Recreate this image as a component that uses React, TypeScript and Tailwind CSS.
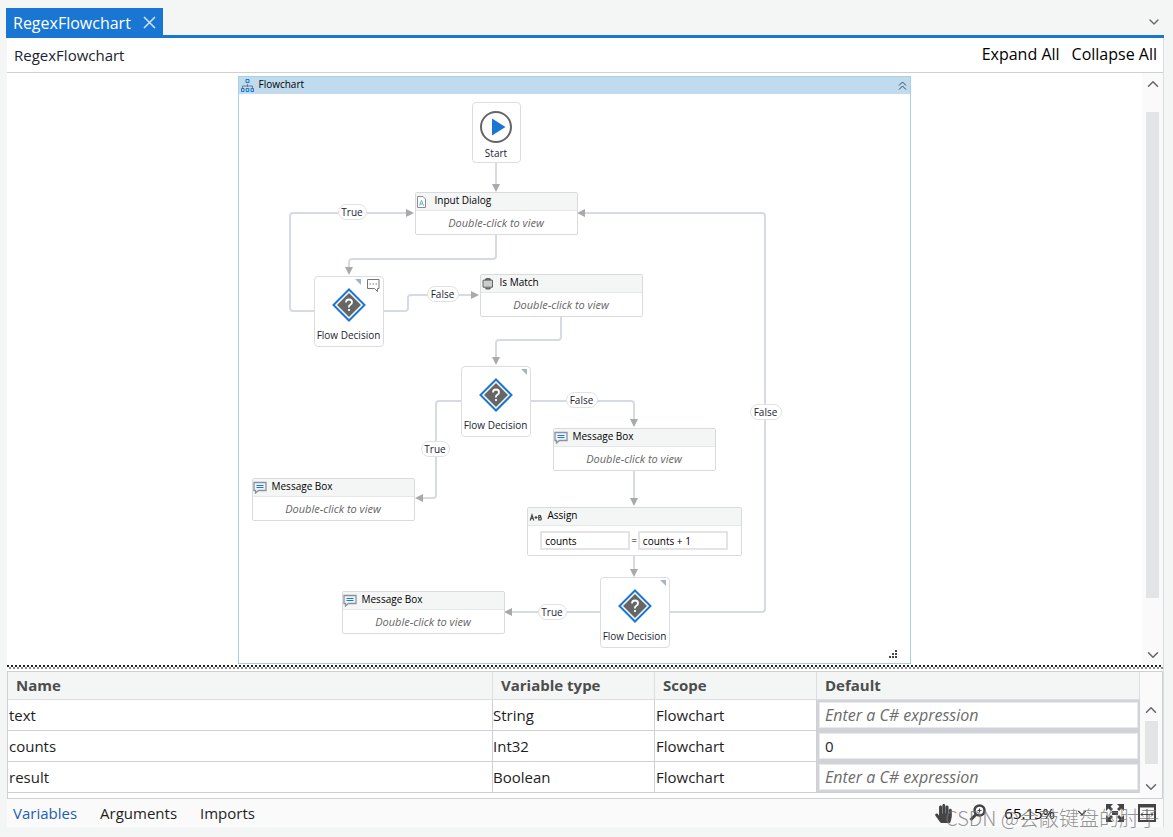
import type { ReactNode } from 'react'
import { FiChevronDown, FiChevronUp } from 'react-icons/fi'
import { FaHandPaper } from 'react-icons/fa'

const VARIABLES = [
  { name: 'text', type: 'String', scope: 'Flowchart', value: '' },
  { name: 'counts', type: 'Int32', scope: 'Flowchart', value: '0' },
  { name: 'result', type: 'Boolean', scope: 'Flowchart', value: '' },
]

// connector paths, in canvas pixels
const EDGES = [
  'M257 69V91',
  'M75 217H54Q51 217 51 214V122Q51 119 54 119H168',
  'M257 141V162Q257 165 254 165H113Q110 165 110 168V174',
  'M144 217H166Q169 217 169 214V204Q169 201 172 201H233',
  'M322 222V243Q322 246 319 246H260Q257 246 257 249V264',
  'M222 307H200Q197 307 197 310V401Q197 404 194 404H184',
  'M291 307H392Q395 307 395 310V326',
  'M395 377V405',
  'M395 462V476',
  'M361 518H273',
  'M430 518H523Q526 518 526 515V122Q526 119 523 119H346',
]

const ARROWS = [
  'M253 90h8l-4 8z',
  'M167 115v8l8-4z',
  'M106 173h8l-4 8z',
  'M232 197v8l8-4z',
  'M253 263h8l-4 8z',
  'M184 400v8l-8-4z',
  'M391 325h8l-4 8z',
  'M391 404h8l-4 8z',
  'M391 475h8l-4 8z',
  'M273 514v8l-8-4z',
  'M346 115v8l-8-4z',
]

const MessageIcon = () => (
  <svg width="14" height="13" viewBox="0 0 14 13" fill="none">
    <path d="M1 1.500h12v8H5.500L2.500 12V9.500H1z" fill="#eef4fa" stroke="#8a949c" strokeWidth="1.300" />
    <path d="M3.500 4.500h7M3.500 6.500h7" stroke="#1976d2" />
  </svg>
)

const InputIcon = () => (
  <svg width="14" height="12" viewBox="0 0 14 12" fill="none">
    <path d="M1.500.500h5.500l2.500 2.500v8.500h-8z" fill="#fff" stroke="#8c8c8c" />
    <path d="M3.500 9.500 5.500 4.500l2 5M4.200 8h2.600" stroke="#5aaee8" />
  </svg>
)

const MatchIcon = () => (
  <svg width="14" height="13" viewBox="0 0 14 13">
    <path d="M3.500 3 5 1h4l1.500 2zM3.500 10.500 5 12.500h4l1.500-2z" fill="#666" />
    <path d="M2 3.200h9.500v7H2z" fill="#ccc" stroke="#666" />
  </svg>
)

const AssignIcon = () => (
  <svg width="14" height="10" viewBox="0 0 14 10" fill="none" stroke="#444" strokeWidth="1.200">
    <path d="M1.200 8.500 3 3l1.800 5.500M1.800 6.500h2.500M5.500 5.500h3M7 4v3" />
    <path d="M9.800 3v5.500M9.800 3.500h1.500q1 1 0 2H9.800h2q1.200 1.300 0 2.500H9.800" />
  </svg>
)

const FlowchartIcon = () => (
  <svg width="14" height="14" viewBox="0 0 14 14" fill="none">
    <path d="M6.500 5v3M1.500 9V7h10v2" stroke="#777" />
    <path d="M5 .500h3v3H5zM.500 9.500h2.500v3H.500zM5.200 9.500h2.600v3H5.200zM10 9.500h2.500v3H10z" stroke="#1976d2" />
  </svg>
)

const Activity = ({ title, icon, place }: { title: string; icon: ReactNode; place: string }) => (
  <section className={`absolute w-[163px] rounded-xs border border-[#d9dadc] bg-white ${place}`}>
    <header className="flex h-[18px] items-center gap-[5px] border-b border-[#e6e7e8] bg-[#f4f6f6]">
      {icon}
      <h3 className="mb-1 leading-4 text-black">{title}</h3>
    </header>
    <p className="py-[3px] text-center text-[11px] leading-[17px] text-[#666] italic">Double-click to view</p>
  </section>
)

const Decision = ({ place, note }: { place: string; note?: boolean }) => (
  <section className={`absolute flex h-[71px] w-[70px] flex-col items-center rounded-sm border border-[#dcdde0] bg-white pt-[11px] ${place}`}>
    <svg width="34" height="34" viewBox="0 0 34 34" fill="none">
      <path d="M17 1.500 32.500 17 17 32.500 1.500 17z" stroke="#1976d2" strokeWidth="2" />
      <path d="M17 5 29 17 17 29 5 17z" fill="#666" />
      <path d="M14 14.500q0-3 3-3t3 2.700q0 1.600-1.700 2.500T17 19.500M17 21v2" stroke="#fff" strokeWidth="1.800" />
    </svg>
    <svg className="absolute top-[2px] right-[2px]" width="66" height="14" viewBox="0 0 66 14" fill="none">
      {note ? (
        <>
          <path d="M40 0h6v6z" fill="#a9b3bf" />
          <path d="M52.500.500h11.500v9h-1.500v3l-3-3h-7z" fill="#fff" stroke="#777" />
          <path d="M54.500 5h1.500M57.500 5h1.500M60.500 5h1.500" stroke="#777" />
        </>
      ) : (
        <path d="M59 0h6v6z" fill="#a9b3bf" />
      )}
    </svg>
    <h3 className="mt-[5px] leading-4 whitespace-nowrap">Flow Decision</h3>
  </section>
)

const Pill = ({ text, place }: { text: string; place: string }) => (
  <span className={`absolute flex h-4 items-center justify-center rounded-full border border-[#e2e2e4] bg-white ${place}`}>
    {text}
  </span>
)

const Canvas = () => (
  <div className="flex w-[673px] flex-col border border-[#a9cfe6] bg-white text-[10px] text-[#1b2433]">
    <div className="flex h-[17px] shrink-0 items-center bg-[#c0dbee] px-[2px]">
      <FlowchartIcon />
      <h2 className="mb-1 ml-1 flex-1 leading-4 text-black">Flowchart</h2>
      <button aria-label="Collapse" className="px-px">
        <svg width="9" height="9" viewBox="0 0 9 9" fill="none" stroke="#34495e">
          <path d="M1 4.500 4.500 1 8 4.500M1 8.500 4.500 5 8 8.500" />
        </svg>
      </button>
    </div>
    <div className="relative flex-1">
      <svg className="absolute inset-0" width="671" height="569" viewBox="0 0 671 569" fill="none">
        {EDGES.map((d) => (
          <path key={d} d={d} stroke="#d6dae6" strokeWidth="2" />
        ))}
        {ARROWS.map((d) => (
          <path key={d} d={d} fill="#a9a9a9" />
        ))}
      </svg>
      <section className="absolute top-[8px] left-[233px] flex h-[61px] w-[49px] flex-col items-center rounded-sm border border-[#dcdde0] bg-white pt-[7px]">
        <svg width="34" height="34" viewBox="0 0 34 34">
          <circle cx="17" cy="17" r="15" fill="#fff" stroke="#666" strokeWidth="2" />
          <path d="M13 8.500 26.500 17 13 25.500z" fill="#1976d2" />
        </svg>
        <h3 className="mt-px leading-4">Start</h3>
      </section>
      <Activity title="Input Dialog" icon={<InputIcon />} place="left-[176px] top-[98px]" />
      <Decision place="left-[75px] top-[182px]" note />
      <Activity title="Is Match" icon={<MatchIcon />} place="left-[241px] top-[180px]" />
      <Decision place="left-[222px] top-[272px]" />
      <Activity title="Message Box" icon={<MessageIcon />} place="left-[314px] top-[334px]" />
      <Activity title="Message Box" icon={<MessageIcon />} place="left-[13px] top-[384px]" />
      <section className="absolute top-[413px] left-[288px] w-[215px] rounded-xs border border-[#d9dadc] bg-white">
        <header className="flex h-[18px] items-center gap-[5px] border-b border-[#e6e7e8] bg-[#f4f6f6] px-px">
          <AssignIcon />
          <h3 className="mb-1 leading-4 text-black">Assign</h3>
        </header>
        <div className="flex items-center justify-center gap-px py-[5px] text-black">
          <input aria-label="To" defaultValue="counts" className="h-[19px] w-[90px] border-2 border-[#e4e4e6] px-[3px]" />
          <span>=</span>
          <input aria-label="Value" defaultValue="counts + 1" className="h-[19px] w-[90px] border-2 border-[#e4e4e6] px-[3px]" />
        </div>
      </section>
      <Decision place="left-[361px] top-[483px]" />
      <Activity title="Message Box" icon={<MessageIcon />} place="left-[103px] top-[497px]" />
      <Pill text="True" place="left-[99px] top-[110px] w-[29px]" />
      <Pill text="False" place="left-[188px] top-[192px] w-8" />
      <Pill text="False" place="left-[327px] top-[298px] w-8" />
      <Pill text="True" place="left-[182px] top-[347px] w-[29px]" />
      <Pill text="False" place="left-[511px] top-[310px] w-8" />
      <Pill text="True" place="left-[299px] top-[510px] w-[29px]" />
      <svg className="absolute right-3 bottom-1" width="9" height="9" viewBox="0 0 9 9" fill="#444">
        <path d="M0 6h2v2H0zM3 6h2v2H3zM6 6h2v2H6zM3 3h2v2H3zM6 3h2v2H6zM6 0h2v2H6z" />
      </svg>
    </div>
  </div>
)

const Splitter = () => (
  <div className="mb-[2px] shrink-0">
    <div className="h-[2px] bg-[repeating-linear-gradient(90deg,#222_0_2px,#fff_2px_4px)]" />
    <div className="h-[2px] bg-[repeating-linear-gradient(90deg,#fff_0_2px,#8a8a8a_2px_4px)]" />
  </div>
)

const VariablesTable = () => (
  <div className="flex h-32 shrink-0 overflow-hidden border border-[#cfd0d4] bg-white">
    <div className="flex-1 overflow-hidden">
      <table className="w-full table-fixed border-collapse text-left text-[15px] leading-5 text-[#1e1e1e]">
        <thead>
          <tr className="h-[27px] bg-[#f4f6f6] text-[#4d4d4d]">
            <th className="border-r border-b border-[#dcdde0] px-2">Name</th>
            <th className="w-[162px] border-r border-b border-[#dcdde0] px-2">Variable type</th>
            <th className="w-[162px] border-r border-b border-[#dcdde0] px-2">Scope</th>
            <th className="w-[323px] border-r border-b border-[#dcdde0] px-2">Default</th>
          </tr>
        </thead>
        <tbody>
          {VARIABLES.map((v) => (
            <tr key={v.name} className="border-b border-[#cfd0d4]">
              <td className="border-r border-[#cfd0d4] px-px">{v.name}</td>
              <td className="border-r border-[#cfd0d4]">{v.type}</td>
              <td className="border-r border-[#cfd0d4] px-px">{v.scope}</td>
              <td className="bg-[#d2d3d8] p-[2px]">
                <input
                  aria-label={`Default value of ${v.name}`}
                  defaultValue={v.value}
                  placeholder="Enter a C# expression"
                  className="block h-[26px] w-full border border-[#e8e9ec] bg-white px-[5px] text-[#1b2433] placeholder:text-base placeholder:text-[#6b6b6b] placeholder:italic"
                />
              </td>
            </tr>
          ))}
          <tr>
            <td colSpan={4} className="px-[6px] text-[#8a8a8a]">
              Create Variable
            </td>
          </tr>
        </tbody>
      </table>
    </div>
    <div className="flex w-[22px] flex-col items-center bg-[#fafafa] pt-[29px] pb-[2px] text-[#666]">
      <FiChevronUp size={18} />
      <div className="mt-[2px] mb-[14px] w-[13px] flex-1 bg-[#e3e4e6]" />
      <FiChevronDown size={18} />
    </div>
  </div>
)

export default function App() {
  return (
    <div className="flex h-screen flex-col bg-[#f4f6f6] px-[7px] pt-2 pb-[10px] font-['Open_Sans','Noto_Sans_CJK_SC',sans-serif] text-[15px] text-[#1b2433]">
      <div className="mr-[2px] -ml-px flex h-[30px] shrink-0 items-stretch justify-between border-b-[3px] border-[#1976d2]">
        <div className="flex items-center gap-3 bg-[#1976d2] px-[7px] pt-[2px] text-base text-white">
          <span className="leading-5">RegexFlowchart</span>
          <button aria-label="Close tab">
            <svg width="13" height="13" viewBox="0 0 13 13" stroke="#d3e5f7" strokeWidth="1.500">
              <path d="M1 1 12 12M12 1 1 12" />
            </svg>
          </button>
        </div>
        <button aria-label="Open documents" className="pr-[2px] text-[#666]">
          <FiChevronDown size={16} />
        </button>
      </div>
      <main className="mr-[2px] flex min-h-0 flex-1 flex-col border-r border-[#dcdde0] bg-white">
        <div className="flex h-[35px] shrink-0 items-center justify-between border-b border-[#cfd0d4] pr-[6px] pl-[7px]">
          <span>RegexFlowchart</span>
          <div className="flex gap-3 pb-[2px] text-base text-black">
            <button>Expand All</button>
            <button>Collapse All</button>
          </div>
        </div>
        <div className="flex min-h-0 flex-1">
          <div className="flex min-w-0 flex-1 justify-center overflow-hidden pt-[3px] pr-px pb-px">
            <Canvas />
          </div>
          <div className="flex w-[21px] flex-col items-center bg-[#fafafa] text-[#666]">
            <FiChevronUp className="my-[2px]" size={18} />
            <div className="mt-[17px] mb-12 w-[13px] flex-1 bg-[#e3e4e6]" />
            <FiChevronDown className="mb-px" size={18} />
          </div>
        </div>
        <Splitter />
        <VariablesTable />
        <div className="flex h-7 shrink-0 items-center justify-between bg-[#fafafa] pl-[6px] text-[#1e1e1e]">
          <nav className="flex gap-[23px]">
            <a href="#variables" className="text-[#1a5fb4]">Variables</a>
            <a href="#arguments">Arguments</a>
            <a href="#imports">Imports</a>
          </nav>
          <div className="relative flex items-center pr-[6px] text-[#444]">
            <button aria-label="Pan">
              <FaHandPaper size={19} />
            </button>
            <button aria-label="Reset zoom" className="ml-4">
              <svg width="17" height="18" viewBox="0 0 17 18" fill="none" stroke="#444">
                <circle cx="10.500" cy="6.500" r="5" strokeWidth="2.500" />
                <path d="M7 10.500 1.500 16" strokeWidth="3" />
                <path d="M8.500 6.500h4M10.500 4.500v4" />
              </svg>
            </button>
            <span className="ml-[18px] text-black">65.15%</span>
            <FiChevronDown className="ml-5" size={14} />
            <button aria-label="Fit to screen" className="ml-4">
              <svg width="20" height="20" viewBox="0 0 20 20" fill="#444">
                <path d="M1 1h7L5.500 3.500 8 6 6 8 3.500 5.500 1 8zM19 1v7l-2.500-2.500L14 8l-2-2 2.500-2.500L12 1zM1 19v-7l2.500 2.500L6 12l2 2-2.500 2.500L8 19zM19 19h-7l2.500-2.500L12 14l2-2 2.500 2.500L19 12zM7 8h6v4H7z" />
              </svg>
            </button>
            <button aria-label="Overview" className="ml-3">
              <svg width="20" height="20" viewBox="0 0 20 20" fill="none" stroke="#444">
                <path d="M2 2h16v16H2z" strokeWidth="2" />
                <path d="M2 3h16" strokeWidth="3" />
                <path d="M10 6v11M4 11.500h12M6 9.500l-2 2 2 2M14 9.500l2 2-2 2" />
              </svg>
            </button>
            <span className="pointer-events-none absolute top-0 right-1 font-['Noto_Sans_CJK_SC',sans-serif] text-[20px] leading-8 font-light whitespace-nowrap text-[#777]/80">
              CSDN @会敲键盘的肘子
            </span>
          </div>
        </div>
      </main>
    </div>
  )
}
